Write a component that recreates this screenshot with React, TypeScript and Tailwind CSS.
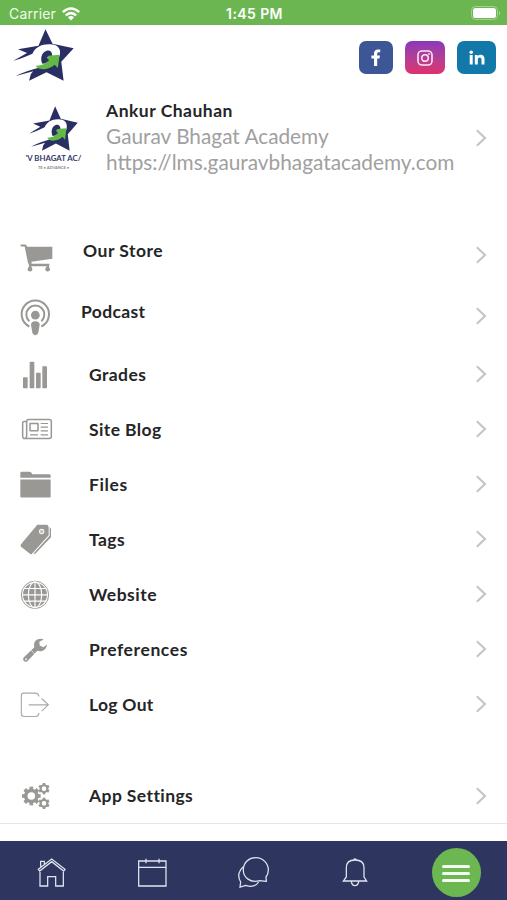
import React from "react";

function Logo({ className }: { className: string }) {
  return (
    <svg viewBox="40 86 182 156" preserveAspectRatio="none" className={className}>
      <path fill="#2a2f63" d="M137 87L158 130L221 144L184 184L191 241L140 216L88 241L93 222L100 213L48 227L112 193L106 163L41 181L82 158L55 147L116 136Z" />
      <path fill="#fff" d="M48 181L98 160C106 141 126 131 150 132C174 132 185 146 179 168L154 168L136 192L116 202L84 212L52 224L106 192Z" />
      <path fill="#2a2f63" d="M157 166C157 154 149 148 139 152C125 157 120 177 128 190C137 190 143 184 147 178Z" />
      <path fill="#62b946" d="M107 196C124 197 137 191 148 180L140 172L146 166L179 163L174 203L164 193C151 206 127 210 114 203Z" />
    </svg>
  );
}

function Chevron() {
  return (
    <svg viewBox="0 0 12 20" className="h-5 w-3 shrink-0" fill="none" stroke="#c5c5c6" strokeWidth="2.1">
      <path d="M1.8 2.2L10 10L1.8 17.8" />
    </svg>
  );
}

function RowIcon({ y, children }: { y: number; children: React.ReactNode }) {
  return (
    <svg viewBox={`45 ${y} 126 120`} className="mt-[2px] h-10 w-[42px] shrink-0" fill="#999895" stroke="none">
      {children}
    </svg>
  );
}

const gear = (cx: number, cy: number, r: number, n: number, w: number) => (
  <g>
    <circle cx={cx} cy={cy} r={r * 0.6} fill="none" stroke="#999895" strokeWidth={r * 0.38} />
    {Array.from({ length: n }, (_, i) => (
      <rect key={i} x={cx - w / 2} y={cy - r} width={w} height={r * 0.35} transform={`rotate(${(360 / n) * i} ${cx} ${cy})`} />
    ))}
  </g>
);

const icons = {
  store: (
    <RowIcon y={17.5}>
      <path d="M62 43H77L82 50H157V86L94 95L95 101H148V108H88L83 94L74 49H62Z" />
      <path d="M87 106H94V112H87ZM140 106H147V112H140Z" />
      <circle cx="90" cy="117" r="7" />
      <circle cx="143" cy="117" r="7" />
    </RowIcon>
  ),
  podcast: (
    <RowIcon y={200.5}>
      <g fill="none" stroke="#999895" strokeWidth="6">
        <path d="M88 289A41 41 0 1 1 124 289" />
        <path d="M88 273A27 27 0 1 1 124 273" />
      </g>
      <circle cx="106" cy="255" r="13" />
      <path d="M93 284Q93 273 106 273Q119 273 119 284L115 308Q113 315 106 315Q99 315 97 308Z" />
    </RowIcon>
  ),
  grades: (
    <RowIcon y={28.5}>
      <rect x="69" y="95" width="14" height="33" rx="2" />
      <rect x="89" y="49" width="14" height="79" rx="2" />
      <rect x="108" y="82" width="14" height="46" rx="2" />
      <rect x="127" y="62" width="14" height="66" rx="2" />
    </RowIcon>
  ),
  blog: (
    <RowIcon y={193.5}>
      <g fill="none" stroke="#999895" strokeWidth="4.5" strokeLinejoin="round">
        <path d="M80 228H72Q68 228 68 232V272Q68 279 75 279H147Q154 279 154 273V228Q154 222 148 222H86Q80 222 80 228V271Q80 279 74 279" />
        <rect x="90" y="234" width="24" height="22" />
        <path d="M122 234H144M122 245H144M122 256H144M90 268H114M122 268H144" strokeWidth="3.6" />
      </g>
    </RowIcon>
  ),
  files: (
    <RowIcon y={13.5}>
      <path d="M61 52V38Q61 34 65 34H89Q92 34 94 37L97 41H148Q152 41 152 45V52Z" />
      <path d="M61 57H152V107Q152 111 148 111H65Q61 111 61 107Z" />
    </RowIcon>
  ),
  tags: (
    <RowIcon y={178.5}>
      <path d="M112 193H139Q146 193 146 200V224L96 280Q93 283 90 280L63 259Q60 256 63 251Z" />
      <path d="M149 200L153 204V230L106 280H100L149 226Z" />
      <circle cx="125" cy="213" r="6.5" fill="#bbb" stroke="#f4f4f4" strokeWidth="3.4" />
    </RowIcon>
  ),
  website: (
    <RowIcon y={13.5}>
      <circle cx="105" cy="73" r="41" fill="none" stroke="#999895" strokeWidth="3" />
      <circle cx="105" cy="73" r="36" />
      <g fill="none" stroke="#fff" strokeWidth="3.4">
        <path d="M105 35V111M67 73H143M71 54H139M71 92H139" />
        <ellipse cx="105" cy="73" rx="20" ry="39" />
      </g>
    </RowIcon>
  ),
  preferences: (
    <RowIcon y={178.5}>
      <path d="M131 207C120 202 107 207 103 217Q101 223 103 230L71 261Q67 266 71 271Q76 276 82 272L112 241C126 246 139 238 141 222L130 230L119 225L118 214Z" />
      <path d="M90 236L107 253" stroke="#fff" strokeWidth="1.8" />
      <circle cx="78" cy="266" r="3" fill="#eee" />
    </RowIcon>
  ),
  logout: (
    <RowIcon y={343.5}>
      <path d="M117 378Q115 368 107 368H71Q64 368 64 376V430Q64 438 72 438H107Q115 438 117 428M86 403H145M125 384L145 403L125 422" fill="none" stroke="#aaa9a7" strokeWidth="3.4" />
    </RowIcon>
  ),
  settings: (
    <RowIcon y={21}>
      {gear(94, 78, 28, 8, 11)}
      {gear(132, 56, 17, 6, 8)}
      {gear(132, 100, 17, 6, 8)}
    </RowIcon>
  ),
};

function Row({ icon, label, className, textClass }: { icon: React.ReactNode; label: string; className: string; textClass: string }) {
  return (
    <div className={`flex shrink-0 items-center pr-5 pl-[15px] ${className}`}>
      {icon}
      <span className={`flex-1 text-[17.5px] leading-6 font-bold text-[#252527] ${textClass}`}>{label}</span>
      <Chevron />
    </div>
  );
}

function NavIcon({ x, children }: { x: number; children: React.ReactNode }) {
  return (
    <svg viewBox={`${x} 255 102 105`} className="mt-1 h-[35px] w-[34px]" fill="none" stroke="#e1e5f2" strokeWidth="3.8">
      {children}
    </svg>
  );
}

export default function App() {
  return (
    <div className="flex h-[900px] w-[507px] flex-col overflow-hidden bg-white font-['Lato',sans-serif]">
      <div className="grid h-[25px] shrink-0 grid-cols-3 items-center bg-[#6cb651] pt-[2px] font-['Inter',sans-serif] text-[14px] text-white">
        <div className="flex items-center gap-[6px] pl-[9px]">
          <span className="tracking-[0.15px] text-[#effbe9]">Carrier</span>
          <svg viewBox="0 0 18 14" className="h-[14px] w-[18px]" fill="none" stroke="#fff" strokeWidth="2.5">
            <path d="M0.8 5.1Q9 -2 17.2 5.1M3.8 8.4Q9 3.9 14.2 8.4" />
            <path d="M5.9 10.3Q9 7.8 12.1 10.3L9 13.5Z" fill="#fff" stroke="none" />
          </svg>
        </div>
        <div className="pl-[2px] text-center text-[14px] font-semibold tracking-[0.4px]">1:45 PM</div>
        <svg viewBox="0 0 32 15" className="mr-[5px] h-[15px] w-8 justify-self-end">
          <rect x="1.5" y="0.5" width="26" height="13" rx="4" fill="none" stroke="#a3d28f" />
          <rect x="3" y="2" width="23" height="10" rx="2.5" fill="#fff" />
          <path d="M29 5V9.5Q31.5 7.2 29 5Z" fill="#a3d28f" />
        </svg>
      </div>

      <header className="flex h-[65px] shrink-0 items-center justify-between pr-[11px] pl-[13px]">
        <Logo className="mb-[5px] h-[52px] w-[61px]" />
        <div className="flex gap-3">
          <div className="flex h-[33px] w-[34px] items-center justify-center rounded-[7px] bg-[#3d5796]">
            <svg viewBox="0 0 10 17" className="h-[17px] w-[10px]" fill="#fff">
              <path d="M3 17V9.6H.4V6.5H3V4.4C3 1.8 4.6.4 7 .4L9.2.6V3.2H7.9C6.6 3.2 6.2 3.9 6.2 4.8V6.5H9L8.5 9.6H6.2V17Z" />
            </svg>
          </div>
          <div className="flex h-[33px] w-10 items-center justify-center rounded-[7px] bg-linear-to-b from-[#8a37ba] to-[#df2f6c]">
            <svg viewBox="0 0 16 16" className="h-4 w-4" fill="none" stroke="#fbe5f4" strokeWidth="1.6">
              <rect x="1" y="1" width="14" height="14" rx="4" />
              <circle cx="8" cy="8" r="3.3" />
              <circle cx="12" cy="4" r="0.9" fill="#fbe5f4" stroke="none" />
            </svg>
          </div>
          <div className="flex h-[33px] w-[39px] items-center justify-center rounded-[7px] bg-[#1277a9]">
            <svg viewBox="0 0 16 15" className="h-[15px] w-4" fill="#fff">
              <circle cx="2.2" cy="2.2" r="1.8" />
              <path d="M.7 5H3.7V14.5H.7ZM5.8 5H8.7V6.3C10.8 3.8 15.5 4.4 15.5 9V14.5H12.5V9.7C12.5 6.6 8.8 6.8 8.8 9.7V14.5H5.8Z" />
            </svg>
          </div>
        </div>
      </header>

      <section className="flex h-[96px] shrink-0 items-center pr-5 pl-[26px]">
        <div className="flex w-[55px] flex-col items-center">
          <Logo className="h-[45px] w-[49px] shrink-0" />
          <span className="mt-[3px] text-[7.8px] leading-[9px] font-bold whitespace-nowrap text-[#353967]">'V BHAGAT AC/</span>
          <span className="mt-px text-[4px] leading-[7px] font-bold whitespace-nowrap text-[#888]">TE • ADVANCE •</span>
        </div>
        <div className="-mt-[3px] ml-[25px] flex-1 whitespace-nowrap">
          <div className="text-[17.5px] leading-[25px] font-bold tracking-[0.5px] text-[#252527]">Ankur Chauhan</div>
          <div className="text-[20.8px] leading-[26px] text-[#a0a0a0]">Gaurav Bhagat Academy</div>
          <div className="text-[20.8px] leading-[26px] text-[#a0a0a0]">https://lms.gauravbhagatacademy.com</div>
        </div>
        <Chevron />
      </section>

      <main className="mt-[38px] flex shrink-0 flex-col">
        <Row icon={icons.store} label="Our Store" className="h-[61px]" textClass="ml-[26px] pb-[7px] tracking-[0.5px]" />
        <Row icon={icons.podcast} label="Podcast" className="h-[61px]" textClass="ml-[24px] pb-[7px] tracking-[0.35px]" />
        <Row icon={icons.grades} label="Grades" className="h-[55px]" textClass="ml-8 pt-[2px] tracking-[0.4px]" />
        <Row icon={icons.blog} label="Site Blog" className="h-[55px]" textClass="ml-8 pt-[2px] tracking-[0.4px]" />
        <Row icon={icons.files} label="Files" className="h-[55px]" textClass="ml-8 pt-[2px] tracking-[0.6px]" />
        <Row icon={icons.tags} label="Tags" className="h-[55px]" textClass="ml-8 pt-[2px] tracking-[0.4px]" />
        <Row icon={icons.website} label="Website" className="h-[55px]" textClass="ml-8 pt-[2px] tracking-[0.5px]" />
        <Row icon={icons.preferences} label="Preferences" className="h-[55px]" textClass="ml-8 pt-[2px] tracking-[0.6px]" />
        <Row icon={icons.logout} label="Log Out" className="h-[55px]" textClass="ml-8 pt-[2px] tracking-[0.3px]" />
        <Row icon={icons.settings} label="App Settings" className="mt-[37px] h-14 border-b border-[#e6e6e6]" textClass="ml-8 tracking-[0.4px]" />
      </main>

      <nav className="mt-auto grid h-[59px] shrink-0 grid-cols-5 items-center justify-items-center bg-[#2e365f]">
        <NavIcon x={101}>
          <path d="M114 298L154 267L194 298L190 303L154 275L118 303ZM119 302V348H142V320H166V348H189V302M121 290V274H132V282" />
        </NavIcon>
        <NavIcon x={405}>
          <path d="M416 273H498V348H416ZM416 292H498M438 266V280M477 266V280" />
        </NavIcon>
        <NavIcon x={709}>
          <path d="M800 334L780 332C750 340 730 321 731 298C732 276 749 263 768 263C790 263 806 280 806 300Q806 312 799 321Z" />
          <path d="M731 290C718 300 712 319 723 336L721 351L738 346C754 352 769 348 777 336" />
        </NavIcon>
        <NavIcon x={252}>
          <path d="M268 333H338L330 321V293C330 278 320 270 303 270C286 270 277 278 277 293V321ZM292 335Q294 347 303 347Q312 347 314 335M299 269Q303 264 307 269" />
        </NavIcon>
        <div className="mt-[4px] flex h-[49px] w-[49px] flex-col items-center justify-center gap-[4px] rounded-full bg-[#6cb751] pt-px">
          <div className="h-[3px] w-7 rounded-full bg-[#f4fff0]" />
          <div className="h-[3px] w-7 rounded-full bg-[#f4fff0]" />
          <div className="h-[3px] w-7 rounded-full bg-[#f4fff0]" />
        </div>
      </nav>
    </div>
  );
}
